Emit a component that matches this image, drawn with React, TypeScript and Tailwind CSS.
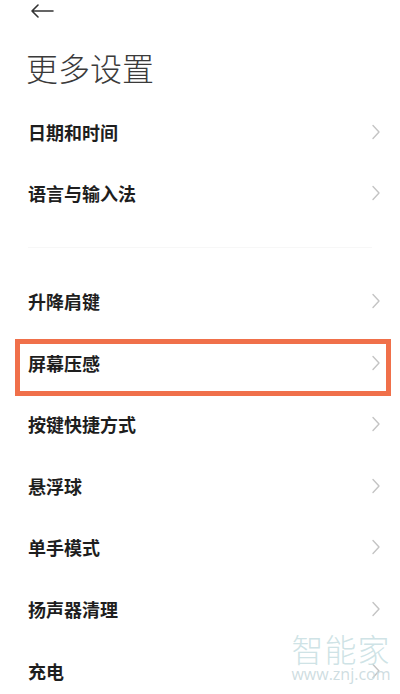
import React from "react";

const Chevron = () => (
  <svg width="10" height="16" viewBox="0 0 10 16" className="shrink-0">
    <path d="M2 1.5 L8 8 L2 14.5" fill="none" stroke="#c4c4c4" strokeWidth="1.4" strokeLinecap="round" strokeLinejoin="round" />
  </svg>
);

const Row = ({ label, highlight }: { label: string; highlight?: boolean }) => (
  <div className="relative flex h-[61.6px] items-center justify-between pl-[28px] pr-[19px]">
    <span className="text-[18px] font-bold text-[#1e1e1e] leading-none">{label}</span>
    <Chevron />
    {highlight && (
      <div className="absolute left-[15px] right-[9px] top-[7px] bottom-[-3px] border-[5px] border-[#f0704a]" />
    )}
  </div>
);

export default function App() {
  return (
    <div
      className="relative w-[400px] h-[694px] overflow-hidden bg-white"
      style={{ fontFamily: '"Noto Sans CJK SC", "Noto Sans", sans-serif' }}
    >
      <div className="h-[22px] pl-[30px] pt-[4px]">
        <svg width="24" height="14" viewBox="0 0 24 14">
          <path d="M23 7 H2 M8 1 L2 7 L8 13" fill="none" stroke="#333" strokeWidth="1.6" strokeLinecap="round" strokeLinejoin="round" />
        </svg>
      </div>
      <div className="h-[79px] pl-[26px] pt-[23px]">
        <h1 className="text-[32px] font-light leading-[44px] text-[#3a3a3a]">更多设置</h1>
      </div>
      <Row label="日期和时间" />
      <Row label="语言与输入法" />
      <div className="flex h-[46px] items-center px-[28px]">
        <div className="h-px w-full bg-[#f7f7f7]" />
      </div>
      <Row label="升降肩键" />
      <Row label="屏幕压感" highlight />
      <Row label="按键快捷方式" />
      <Row label="悬浮球" />
      <Row label="单手模式" />
      <Row label="扬声器清理" />
      <Row label="充电" />
      <div className="pointer-events-none absolute left-[290px] top-[633px] flex w-[102px] flex-col items-center gap-[3px]">
        <span className="text-[32px] font-light leading-[30px] tracking-[1px] text-[#c9dfe3]/90">智能家</span>
        <span className="text-[16px] leading-[16px] text-[#c9d9dd]/90" style={{ fontFamily: '"Open Sans", sans-serif' }}>www.znj.com</span>
      </div>
    </div>
  );
}
